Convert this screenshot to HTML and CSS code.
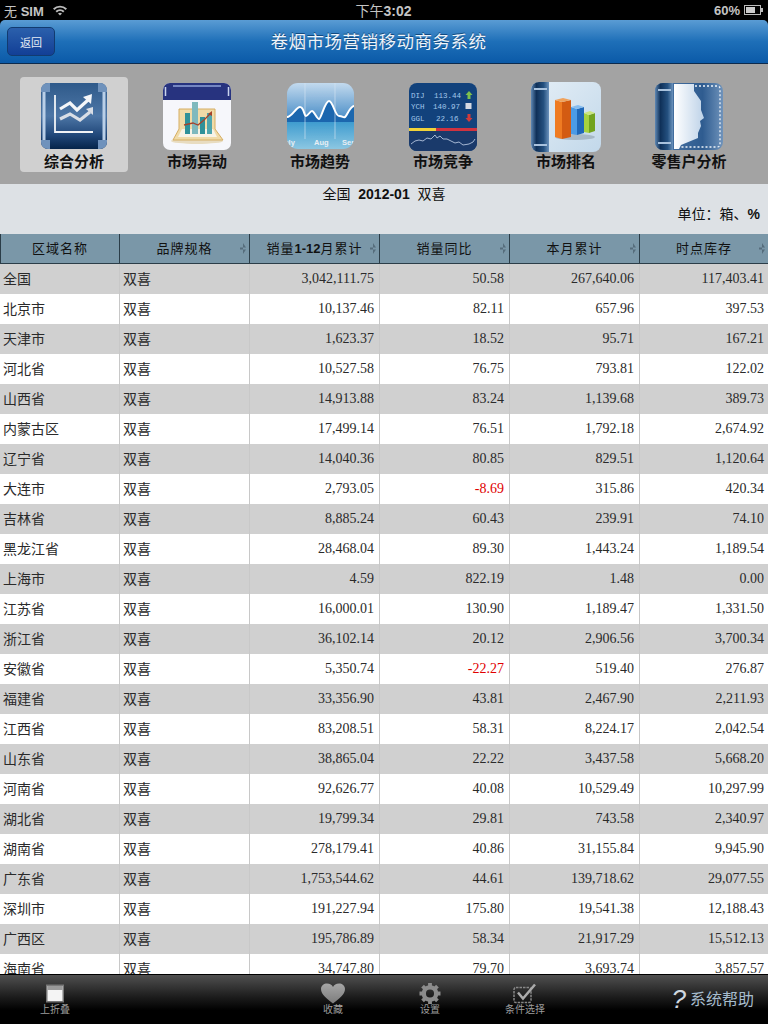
FILE: index.html
```html
<!DOCTYPE html>
<html lang="zh-CN">
<head>
    <meta charset="UTF-8">
    <title>卷烟市场营销移动商务系统</title>
    <link rel="stylesheet" href="styles.css">
</head>
<body>
<div class="page">
    <div class="statusbar">
        <div class="status-left">
            <span>无 <b>SIM</b></span>
            <svg class="wifi" width="16" height="12" viewBox="0 0 16 12"><path d="M1 4.5A10 10 0 0 1 15 4.5L13.6 5.9A8 8 0 0 0 2.4 5.9ZM3.5 7A6.5 6.5 0 0 1 12.5 7L11.1 8.4A4.6 4.6 0 0 0 4.9 8.4ZM8 11.5L6 9.6A3 3 0 0 1 10 9.6Z" fill="#bbb"/></svg>
        </div>
        <div class="status-time">下午<b>3:02</b></div>
        <div class="status-right">
            <b>60%</b>
            <svg width="19" height="10" viewBox="0 0 19 10"><rect x="0.5" y="0.5" width="16" height="9" fill="none" stroke="#bbb"/><rect x="2" y="2" width="9" height="6" fill="#ccc"/><rect x="17" y="3" width="2" height="4" fill="#bbb"/></svg>
        </div>
    </div>

    <div class="navbar">
        <button class="back">返回</button>
        <h1>卷烟市场营销移动商务系统</h1>
    </div>

    <div class="toolbar">
        <div class="tool active">
            <svg width="66" height="68" viewBox="0 0 66 68">
                <defs>
                    <linearGradient id="g1" x1="0" y1="0" x2="0" y2="1"><stop offset="0" stop-color="#2f5a8a"/><stop offset=".5" stop-color="#4d76a6"/><stop offset=".8" stop-color="#1f4678"/><stop offset="1" stop-color="#05244a"/></linearGradient>
                </defs>
                <rect width="66" height="66" rx="7" fill="url(#g1)"/>
                <rect x="1.5" y="9" width="3" height="48" fill="#b9cfe8"/>
                <rect x="61.5" y="9" width="3" height="48" fill="#b9cfe8"/>
                <path d="M0 7A7 7 0 0 1 7 0H9V9H0ZM57 0H59A7 7 0 0 1 66 7V9H57ZM0 57H9V66H7A7 7 0 0 1 0 59ZM57 57H66V59A7 7 0 0 1 59 66H57Z" fill="#6f92bc"/>
                <path d="M14 12V49H52" stroke="#f0f3f7" stroke-width="1.8" fill="none"/>
                <path d="M19 26L29 20L36 27L47 17" stroke="#f4f6f9" stroke-width="3.2" fill="none"/>
                <path d="M19 36L29 31L39 37L49 29" stroke="#d9dee6" stroke-width="3.2" fill="none"/>
                <path d="M42 14L51 11L50 21Z" fill="#f4f6f9"/>
                <path d="M45 26L52 24L52 32Z" fill="#d9dee6"/>
            </svg>
            <span>综合分析</span>
        </div>
        <div class="tool">
            <svg width="68" height="68" viewBox="0 0 68 68">
                <rect width="68" height="67" rx="7" fill="#f6f7fb"/>
                <path d="M0 17V7A7 7 0 0 1 7 0H61A7 7 0 0 1 68 7V17Z" fill="#27337f"/>
                <path d="M10 3H58" stroke="#8fa3d8" stroke-width="1.5"/>
                <path d="M2.5 4V13M65.5 4V13" stroke="#c9d4ee" stroke-width="1.5"/>
                <ellipse cx="34" cy="58" rx="26" ry="3" fill="#e8dcc0"/>
                <path d="M16 26H52V46L60 57H10L16 46Z" fill="#f0dba8" stroke="#d6ae62"/>
                <path d="M19 46H50L54 54H15Z" fill="#f7f3e6"/>
                <rect x="22" y="30" width="5" height="21" fill="#2f9199"/>
                <rect x="29" y="19" width="6" height="32" fill="#7fb9bd"/>
                <rect x="37" y="34" width="5" height="17" fill="#2f9199"/>
                <rect x="44" y="30" width="5" height="21" fill="#4fa6ad"/>
                <path d="M21 42L30 40L35 42L41 37L47 31" stroke="#a5432c" stroke-width="1.3" fill="none"/>
                <path d="M45 31L49 28L49 33Z" fill="#a5432c"/>
            </svg>
            <span>市场异动</span>
        </div>
        <div class="tool">
            <svg width="67" height="68" viewBox="0 0 67 68">
                <defs>
                    <linearGradient id="g2" x1="0" y1="0" x2="0" y2="1"><stop offset="0" stop-color="#c3daee"/><stop offset="1" stop-color="#3f87c4"/></linearGradient>
                    <linearGradient id="g3" x1="0" y1="0" x2="0" y2="1"><stop offset="0" stop-color="#3f9ccf"/><stop offset="1" stop-color="#8cc7e2"/></linearGradient>
                    <clipPath id="c2"><rect width="67" height="66" rx="11"/></clipPath>
                </defs>
                <g clip-path="url(#c2)">
                    <rect width="67" height="39" fill="url(#g2)"/>
                    <rect y="39" width="67" height="27" fill="url(#g3)"/>
                    <path d="M0 34C5 34 9 24 13 24S17 33 19 33S23 28 25 28S30 36 32 36S38 18 42 18S48 33 52 33S56 35 58 34S63 23 67 23V39H0Z" fill="#1c67ae"/>
                    <path d="M18 0V56M48 0V56" stroke="#d5e5f3" stroke-width=".8" opacity=".8"/>
                    <path d="M0 34C5 34 9 24 13 24S17 33 19 33S23 28 25 28S30 36 32 36S38 18 42 18S48 33 52 33S56 35 58 34S63 23 67 23" stroke="#fff" stroke-width="2" fill="none"/>
                    <text class="axis" x="-3" y="62">uly</text>
                    <text class="axis" x="27" y="62">Aug</text>
                    <text class="axis" x="55" y="62">Sep</text>
                </g>
            </svg>
            <span>市场趋势</span>
        </div>
        <div class="tool">
            <svg width="68" height="68" viewBox="0 0 68 68">
                <rect width="68" height="68" rx="8" fill="#12427c"/>
                <text class="ticker" x="2" y="15">DIJ</text><text class="ticker" x="25" y="15">113.44</text>
                <text class="ticker" x="2" y="26">YCH</text><text class="ticker" x="24" y="26">140.97</text>
                <text class="ticker" x="2" y="38">GGL</text><text class="ticker" x="27" y="38">22.16</text>
                <path d="M60 8L63.5 12H61.5V16H58.5V12H56.5Z" fill="#7fbf4d"/>
                <rect x="56.5" y="20" width="6" height="6" fill="#d5d9e2"/>
                <path d="M60 39L63.5 35H61.5V31H58.5V35H56.5Z" fill="#d23a3a"/>
                <path d="M0 48H68V60A8 8 0 0 1 60 68H8A8 8 0 0 1 0 60Z" fill="#1a3a6b"/>
                <rect y="45" width="27" height="3" fill="#f0d23a"/>
                <rect x="27" y="45" width="41" height="3" fill="#cf3340"/>
                <path d="M2 61L6 58L10 57L14 58L18 55L22 56L26 52L28 55L31 53L34 56L38 56L42 58L46 60L50 59L54 62L60 61L64 59L66 56" stroke="#c6d6ec" stroke-width=".8" fill="none"/>
            </svg>
            <span>市场竞争</span>
        </div>
        <div class="tool">
            <svg class="tall" width="70" height="70" viewBox="0 0 70 70">
                <defs>
                    <linearGradient id="g4" x1="0" y1="0" x2="1" y2="1"><stop offset="0" stop-color="#e4eef6"/><stop offset="1" stop-color="#c2d8ea"/></linearGradient>
                    <linearGradient id="spine" x1="0" y1="0" x2="1" y2="0"><stop offset="0" stop-color="#5f88b4"/><stop offset=".3" stop-color="#0f3058"/><stop offset=".7" stop-color="#24507f"/><stop offset="1" stop-color="#6b92bc"/></linearGradient>
                </defs>
                <rect width="70" height="70" rx="8" fill="url(#g4)"/>
                <path d="M8 0H18V70H8A8 8 0 0 1 0 62V8A8 8 0 0 1 8 0Z" fill="url(#spine)"/>
                <path d="M3 7H16M3 63H16" stroke="#a9c2dd" stroke-width="2"/>
                <ellipse cx="44" cy="55" rx="20" ry="3" fill="#8fa0ae" opacity=".6"/>
                <path d="M24 18L31 20V57L24 55Z" fill="#ef7b22"/><path d="M31 20L40 18V55L31 57Z" fill="#d35b12"/><path d="M24 18L32 16L40 18L31 20Z" fill="#f0a25c"/>
                <path d="M40 25L46 27V53L40 52Z" fill="#4b9be6"/><path d="M46 27L53 25V51L46 53Z" fill="#2068b8"/><path d="M40 25L47 23L53 25L46 27Z" fill="#86bdf0"/>
                <path d="M53 31L58 33V51L53 50Z" fill="#a7d23f"/><path d="M58 33L64 31V49L58 51Z" fill="#72a31f"/><path d="M53 31L59 29L64 31L58 33Z" fill="#cbe57e"/>
            </svg>
            <span>市场排名</span>
        </div>
        <div class="tool">
            <svg width="68" height="68" viewBox="0 0 68 68">
                <defs>
                    <linearGradient id="g5" x1="0" y1="0" x2="1" y2="0"><stop offset="0" stop-color="#fff"/><stop offset="1" stop-color="#bdd2e8"/></linearGradient>
                    <linearGradient id="g6" x1="0" y1="0" x2="1" y2="0"><stop offset="0" stop-color="#4f78a6"/><stop offset=".7" stop-color="#2f5c90"/><stop offset="1" stop-color="#6f93bb"/></linearGradient>
                    <linearGradient id="spine2" x1="0" y1="0" x2="1" y2="0"><stop offset="0" stop-color="#5f88b4"/><stop offset=".3" stop-color="#0f3058"/><stop offset=".7" stop-color="#24507f"/><stop offset="1" stop-color="#6b92bc"/></linearGradient>
                </defs>
                <rect width="68" height="67" rx="8" fill="url(#g6)"/>
                <path d="M8 0H18V67H8A8 8 0 0 1 0 59V8A8 8 0 0 1 8 0Z" fill="url(#spine2)"/>
                <path d="M3 7H16M3 60H16" stroke="#a9c2dd" stroke-width="2"/>
                <path d="M19 1H39V8L46 18V27L49 35L45 38L46 43L43 50V55L26 62L24 66H19Z" fill="url(#g5)"/>
                <path d="M40 3H62Q65 3 65 6V61Q65 64 62 64H26" stroke="#eef3f9" stroke-width="1.3" stroke-dasharray="2 2" fill="none"/>
            </svg>
            <span>零售户分析</span>
        </div>
    </div>

    <div class="infoband">
        <div class="info-title">全国&nbsp; <b>2012-01</b>&nbsp; 双喜</div>
        <div class="info-unit">单位：箱、<b>%</b></div>
    </div>

    <div class="tablewrap">
        <table>
            <colgroup>
                <col class="c1"><col class="c2"><col class="c3"><col class="c4"><col class="c5"><col class="c6">
            </colgroup>
            <thead>
                <tr>
                    <th>区域名称</th>
                    <th class="sort">品牌规格</th>
                    <th class="sort">销量<b>1-12</b>月累计</th>
                    <th class="sort">销量同比</th>
                    <th class="sort">本月累计</th>
                    <th class="sort">时点库存</th>
                </tr>
            </thead>
            <tbody id="rows"></tbody>
        </table>
    </div>

    <div class="tabbar">
        <div class="tab tab-fold">
            <svg width="18" height="18" viewBox="0 0 18 18"><rect x=".75" y=".75" width="16.5" height="16.5" fill="#f4f4f4" stroke="#777" stroke-width="1.5"/><rect x="1.5" y="1.5" width="15" height="4" fill="#9a9a9a"/></svg>
            <span>上折叠</span>
        </div>
        <div class="tab tab-fav">
            <svg width="24" height="20" viewBox="0 0 24 20">
                <defs><linearGradient id="g7" x1="0" y1="0" x2="0" y2="1"><stop offset="0" stop-color="#a6a6a6"/><stop offset="1" stop-color="#7c7c7c"/></linearGradient></defs>
                <path d="M12 20C6 15 0 11 0 5.5C0 2 3 0 6 0C9 0 11 1.5 12 3.5C13 1.5 15 0 18 0C21 0 24 2 24 5.5C24 11 18 15 12 20Z" fill="url(#g7)"/>
            </svg>
            <span>收藏</span>
        </div>
        <div class="tab tab-set">
            <svg width="22" height="22" viewBox="0 0 22 22"><circle cx="11" cy="11" r="6.5" fill="none" stroke="#8c8c8c" stroke-width="4.5"/><path d="M11 0V5M11 17V22M0 11H5M17 11H22M3.2 3.2L6.8 6.8M15.2 15.2L18.8 18.8M18.8 3.2L15.2 6.8M6.8 15.2L3.2 18.8" stroke="#8c8c8c" stroke-width="4"/></svg>
            <span>设置</span>
        </div>
        <div class="tab tab-cond">
            <svg width="24" height="20" viewBox="0 0 24 20"><rect x="1" y="4" width="17" height="15" rx="2" fill="none" stroke="#888" stroke-width="1.5" stroke-dasharray="2.5 1"/><path d="M5 9L10 15L22 1" fill="none" stroke="#aaa" stroke-width="2.5"/></svg>
            <span>条件选择</span>
        </div>
        <div class="help"><span class="q">?</span>系统帮助</div>
    </div>
</div>
<script src="app.js"></script>
</body>
</html>
```
FILE: styles.css
```css
html, body {
    margin: 0;
    padding: 0;
}
body {
    background-color: #000;
    font-family: "Liberation Sans", "Noto Sans CJK SC", sans-serif;
}
.page {
    width: 768px;
    height: 1024px;
    display: flex;
    flex-direction: column;
    overflow: hidden;
    background-color: #000;
}
.statusbar {
    height: 20px;
    flex: none;
    display: grid;
    grid-template-columns: 1fr auto 1fr;
    align-items: center;
    padding: 0 5px 0 4px;
    color: #c4c4c4;
    font-size: 13px;
}
.status-left {
    display: flex;
    align-items: center;
    gap: 8px;
}
.status-time {
    font-size: 14px;
}
.status-right {
    display: flex;
    justify-content: flex-end;
    align-items: center;
    gap: 4px;
}
.navbar {
    height: 44px;
    flex: none;
    display: flex;
    align-items: center;
    justify-content: center;
    position: relative;
    box-sizing: border-box;
    border-radius: 5px 5px 0 0;
    border-bottom: 1px solid #0c2a4d;
    background: linear-gradient(#5a9cd4, #1e6fb8 50%, #0b5aa8);
}
.navbar h1 {
    margin: 0 11px 2px 0;
    font-size: 17.5px;
    font-weight: normal;
    letter-spacing: 0.5px;
    color: #eef4fa;
    text-shadow: 0 -1px 0 #124a80;
}
.back {
    position: absolute;
    left: 7px;
    top: 7px;
    width: 48px;
    height: 29px;
    padding: 0;
    font-family: inherit;
    font-size: 11px;
    color: #e6ecf5;
    border: 1px solid #123b70;
    border-radius: 5px;
    background: linear-gradient(#2b60ac, #123f96);
}
.toolbar {
    height: 120px;
    flex: none;
    display: grid;
    grid-template-columns: repeat(6, 108px);
    column-gap: 15px;
    align-items: start;
    padding: 13px 0 0 20px;
    box-sizing: border-box;
    background-color: #a3a3a3;
}
.tool {
    height: 95px;
    display: flex;
    flex-direction: column;
    align-items: center;
    padding-top: 6px;
    box-sizing: border-box;
    border-radius: 4px;
}
.tool svg {
    display: block;
}
.tool svg.tall {
    margin: -1px 0;
}
.tool span {
    font-size: 15px;
    font-weight: bold;
    line-height: 16px;
    margin-top: 3px;
    color: #111;
    white-space: nowrap;
}
.tool.active {
    background-color: #d0d0d0;
}
.axis {
    font-family: "Liberation Sans", sans-serif;
    font-size: 7.5px;
    font-weight: bold;
    fill: #e8eef4;
}
.ticker {
    font-family: "Liberation Mono", monospace;
    font-size: 7.5px;
    fill: #a3c8ea;
}
.infoband {
    height: 50px;
    flex: none;
    background-color: #dde1e5;
    box-sizing: border-box;
    color: #111;
    font-size: 14px;
    padding-top: 2px;
}
.info-title {
    text-align: center;
    line-height: 17px;
}
.info-unit {
    text-align: right;
    line-height: 17px;
    margin-top: 3px;
    padding-right: 8px;
}
.tablewrap {
    flex: 1;
    min-height: 0;
    overflow: hidden;
    background-color: #fff;
}
table {
    width: 768px;
    border-collapse: separate;
    border-spacing: 0;
    table-layout: fixed;
}
.c1 { width: 120px; }
.c2, .c3, .c4, .c5 { width: 130px; }
.c6 { width: 128px; }
th {
    height: 30px;
    padding: 0 0 2px;
    box-sizing: border-box;
    font-size: 13px;
    font-weight: normal;
    color: #111;
    letter-spacing: 1px;
    background-color: #7a97a8;
    border-bottom: 1px solid #2b3d48;
    border-right: 1px solid #2b3d48;
    position: relative;
}
th:first-child {
    border-left: 1px solid #2b3d48;
}
th:last-child {
    border-right: none;
}
th b {
    letter-spacing: 0;
}
.sort::after {
    content: "";
    position: absolute;
    right: 3px;
    top: 9px;
    width: 6px;
    height: 11px;
    background-color: #566d7c;
    clip-path: polygon(50% 0, 100% 42%, 0 42%, 0 58%, 100% 58%, 50% 100%);
}
td {
    height: 30px;
    padding: 0 3px 1px;
    box-sizing: border-box;
    font-family: "Liberation Serif", "Noto Sans CJK SC", serif;
    font-size: 14px;
    line-height: 16px;
    color: #2a2a2a;
    border-right: 1px solid #c8c8c8;
    white-space: nowrap;
}
td:first-child,
td:nth-child(2) {
    font-family: "Liberation Sans", "Noto Sans CJK SC", sans-serif;
}
td:last-child {
    border-right: none;
}
td.num {
    text-align: right;
    padding-right: 5px;
}
td:last-child.num {
    padding-right: 4px;
}
td.neg {
    color: #e00000;
}
tr.odd td {
    background-color: #d0d0d0;
}
.tabbar {
    height: 50px;
    flex: none;
    border-top: 1px solid #000;
    box-sizing: border-box;
    background: linear-gradient(#505050, #1c1c1c 45%, #000 72%);
    display: flex;
    align-items: flex-start;
    padding-top: 8px;
}
.tab {
    display: flex;
    flex-direction: column;
    align-items: center;
    color: #9c9c9c;
    font-size: 10px;
    line-height: 11px;
}
.tab svg {
    display: block;
    height: 21px;
}
.tab-fold { width: 110px; }
.tab-fav { width: 100px; margin-left: 173px; }
.tab-set { width: 94px; }
.tab-cond { width: 96px; }
.help {
    margin-left: auto;
    color: #a7bccd;
    font-size: 16px;
    padding: 6px 14px 0 0;
    line-height: 22px;
    white-space: nowrap;
}
.q {
    font-size: 26px;
    line-height: 20px;
    font-style: italic;
    color: #d0d8e0;
    margin-right: 4px;
    vertical-align: -3px;
}
```
FILE: app.js
```js
var data = [
    ["全国", "3,042,111.75", "50.58", "267,640.06", "117,403.41"],
    ["北京市", "10,137.46", "82.11", "657.96", "397.53"],
    ["天津市", "1,623.37", "18.52", "95.71", "167.21"],
    ["河北省", "10,527.58", "76.75", "793.81", "122.02"],
    ["山西省", "14,913.88", "83.24", "1,139.68", "389.73"],
    ["内蒙古区", "17,499.14", "76.51", "1,792.18", "2,674.92"],
    ["辽宁省", "14,040.36", "80.85", "829.51", "1,120.64"],
    ["大连市", "2,793.05", "-8.69", "315.86", "420.34"],
    ["吉林省", "8,885.24", "60.43", "239.91", "74.10"],
    ["黑龙江省", "28,468.04", "89.30", "1,443.24", "1,189.54"],
    ["上海市", "4.59", "822.19", "1.48", "0.00"],
    ["江苏省", "16,000.01", "130.90", "1,189.47", "1,331.50"],
    ["浙江省", "36,102.14", "20.12", "2,906.56", "3,700.34"],
    ["安徽省", "5,350.74", "-22.27", "519.40", "276.87"],
    ["福建省", "33,356.90", "43.81", "2,467.90", "2,211.93"],
    ["江西省", "83,208.51", "58.31", "8,224.17", "2,042.54"],
    ["山东省", "38,865.04", "22.22", "3,437.58", "5,668.20"],
    ["河南省", "92,626.77", "40.08", "10,529.49", "10,297.99"],
    ["湖北省", "19,799.34", "29.81", "743.58", "2,340.97"],
    ["湖南省", "278,179.41", "40.86", "31,155.84", "9,945.90"],
    ["广东省", "1,753,544.62", "44.61", "139,718.62", "29,077.55"],
    ["深圳市", "191,227.94", "175.80", "19,541.38", "12,188.43"],
    ["广西区", "195,786.89", "58.34", "21,917.29", "15,512.13"],
    ["海南省", "34,747.80", "79.70", "3,693.74", "3,857.57"]
];

var html = "";
for (var i = 0; i < data.length; i++) {
    var r = data[i];
    html += '<tr class="' + (i % 2 == 0 ? "odd" : "even") + '">';
    html += "<td>" + r[0] + "</td><td>双喜</td>";
    for (var j = 1; j < r.length; j++) {
        var neg = r[j].charAt(0) == "-" ? " neg" : "";
        html += '<td class="num' + neg + '">' + r[j] + "</td>";
    }
    html += "</tr>";
}
document.getElementById("rows").innerHTML = html;
```
